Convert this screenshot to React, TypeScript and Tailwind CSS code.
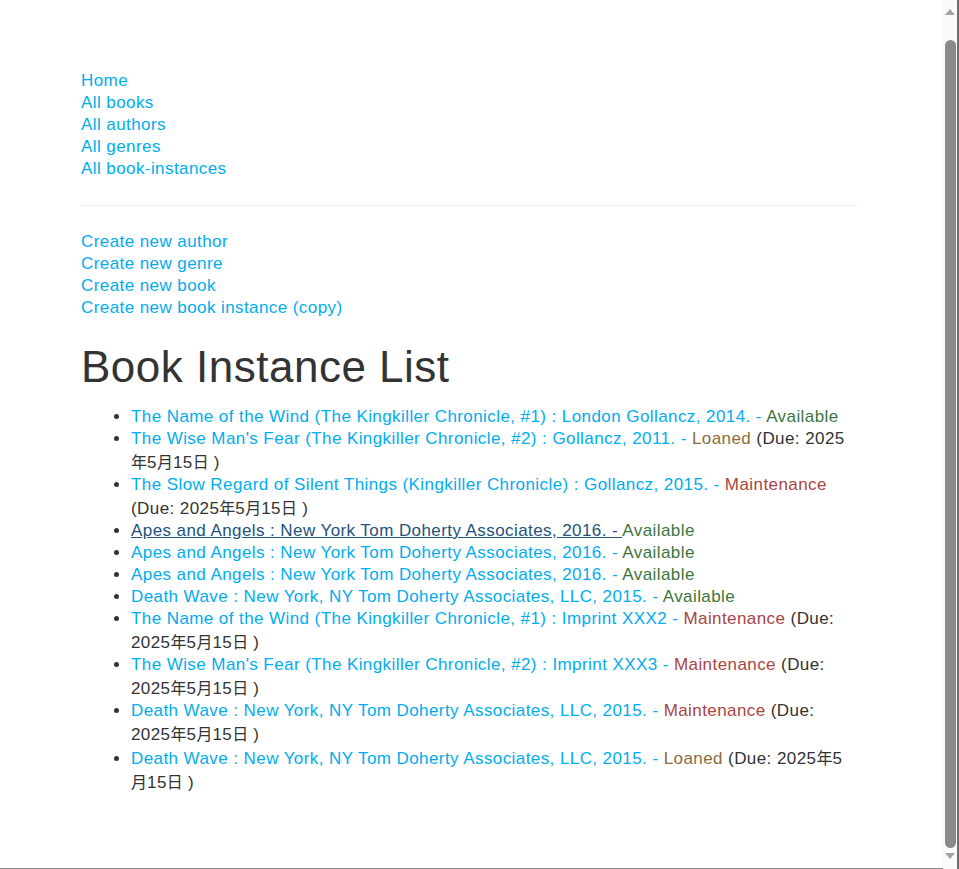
import React from "react";

type Instance = {
  title: string;
  imprint: string;
  status: "Available" | "Loaned" | "Maintenance";
  due?: string;
  hover?: boolean;
};

const DUE = "2025年5月15日";

const instances: Instance[] = [
  { title: "The Name of the Wind (The Kingkiller Chronicle, #1)", imprint: "London Gollancz, 2014.", status: "Available" },
  { title: "The Wise Man's Fear (The Kingkiller Chronicle, #2)", imprint: "Gollancz, 2011.", status: "Loaned", due: DUE },
  { title: "The Slow Regard of Silent Things (Kingkiller Chronicle)", imprint: "Gollancz, 2015.", status: "Maintenance", due: DUE },
  { title: "Apes and Angels", imprint: "New York Tom Doherty Associates, 2016.", status: "Available", hover: true },
  { title: "Apes and Angels", imprint: "New York Tom Doherty Associates, 2016.", status: "Available" },
  { title: "Apes and Angels", imprint: "New York Tom Doherty Associates, 2016.", status: "Available" },
  { title: "Death Wave", imprint: "New York, NY Tom Doherty Associates, LLC, 2015.", status: "Available" },
  { title: "The Name of the Wind (The Kingkiller Chronicle, #1)", imprint: "Imprint XXX2", status: "Maintenance", due: DUE },
  { title: "The Wise Man's Fear (The Kingkiller Chronicle, #2)", imprint: "Imprint XXX3", status: "Maintenance", due: DUE },
  { title: "Death Wave", imprint: "New York, NY Tom Doherty Associates, LLC, 2015.", status: "Maintenance", due: DUE },
  { title: "Death Wave", imprint: "New York, NY Tom Doherty Associates, LLC, 2015.", status: "Loaned", due: DUE },
];

const navLinks = ["Home", "All books", "All authors", "All genres", "All book-instances"];
const createLinks = [
  "Create new author",
  "Create new genre",
  "Create new book",
  "Create new book instance (copy)",
];

function statusClass(status: Instance["status"]) {
  if (status === "Available") return "text-[#3c763d]";
  if (status === "Loaned") return "text-[#8a6d3b]";
  return "text-[#a94442]";
}

// CJK glyphs sit in a slightly taller box, so their lines grow by 2px on top
function DueText({ text }: { text: string }) {
  const parts = text.split(/([\u4e00-\u9fff])/).filter((p) => p !== "");
  return (
    <>
      {parts.map((p, i) =>
        /[\u4e00-\u9fff]/.test(p) ? (
          <span key={i} className="inline-block pt-[2px] text-[16px] tracking-normal">
            {p}
          </span>
        ) : (
          <React.Fragment key={i}>{p}</React.Fragment>
        )
      )}
    </>
  );
}

function FakeScrollbar() {
  return (
    <div className="fixed top-0 right-0 flex h-[869px] w-[16px] flex-col items-center border-r-2 border-[#6e6e6e] bg-[#fafafa]">
      <svg width="10" height="6" viewBox="0 0 10 6" className="mt-[9px]">
        <path d="M0 6 L5 0 L10 6 Z" fill="#a3a3a3" />
      </svg>
      <div className="mt-[25px] h-[808px] w-[11px] rounded-full bg-[#8a8a8a]" />
      <svg width="10" height="6" viewBox="0 0 10 6" className="mt-[5px]">
        <path d="M0 0 L5 6 L10 0 Z" fill="#a3a3a3" />
      </svg>
    </div>
  );
}

export default function App() {
  return (
    <div
      className="min-h-[869px] border-b border-[#8a8a8a] bg-white text-[17px] leading-[22px] tracking-[0.42px] text-[#333333]"
      style={{ fontFamily: '"Liberation Sans", Arial, "Noto Sans CJK SC", sans-serif' }}
    >
      <div className="ml-[81px] w-[777px] pt-[70px] pb-[60px]">
        {/* Sidebar links */}
        <ul>
          {navLinks.map((l) => (
            <li key={l}>
              <a href="#" className="text-[#00adef]">
                {l}
              </a>
            </li>
          ))}
        </ul>
        <hr className="mt-[25px] mb-[25px] border-t border-[#eeeeee]" />
        <ul>
          {createLinks.map((l) => (
            <li key={l}>
              <a href="#" className="text-[#00adef]">
                {l}
              </a>
            </li>
          ))}
        </ul>

        {/* Content */}
        <h1 className="mt-[24px] mb-[15px] text-[44px] leading-[48px] font-normal tracking-[0.5px]">
          Book Instance List
        </h1>
        <ul className="list-disc pl-[50px]">
          {instances.map((b, i) => (
            <li key={i}>
              <a
                href="#"
                className={b.hover ? "text-[#23527c] underline" : "text-[#00adef]"}
              >
                {b.title} : {b.imprint} -{" "}
              </a>
              <span className={statusClass(b.status)}>{b.status}</span>
              {b.due && (
                <span>
                  {" "}
                  <DueText text={`(Due: ${b.due} )`} />
                </span>
              )}
            </li>
          ))}
        </ul>
      </div>
      <FakeScrollbar />
    </div>
  );
}
